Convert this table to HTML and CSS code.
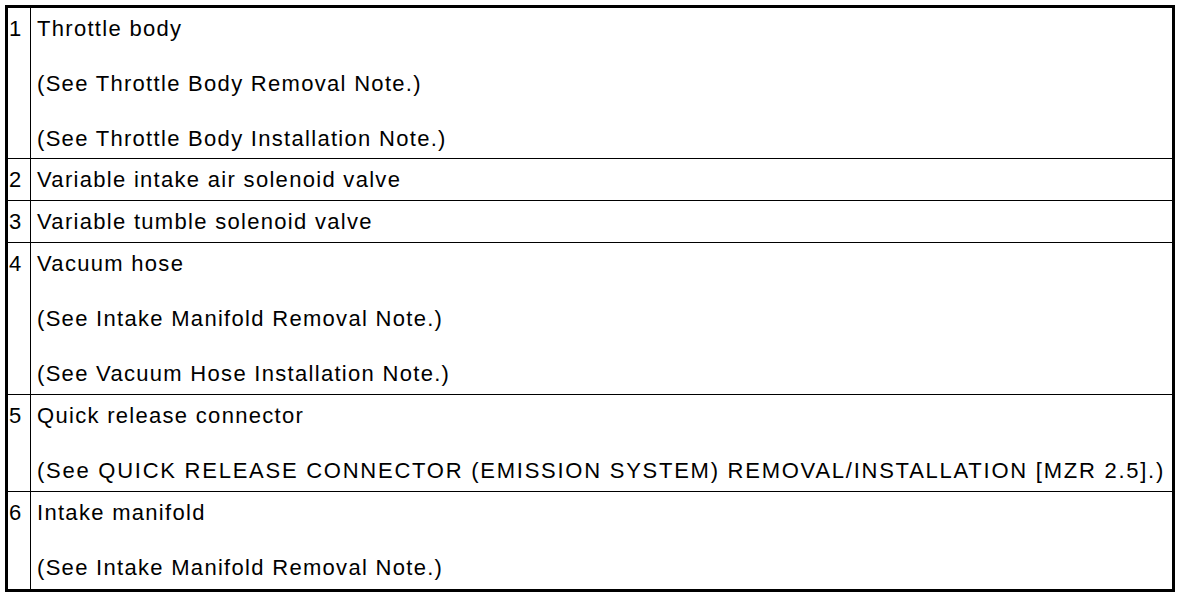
FILE: index.html
```html
<!DOCTYPE html>
<html>
<head>
<meta charset="utf-8">
<link rel="stylesheet" href="styles.css">
</head>
<body>
<div class="table">
  <div class="row">
    <div class="num">1</div>
    <div class="desc">
      <p>Throttle body</p>
      <p>(See Throttle Body Removal Note.)</p>
      <p>(See Throttle Body Installation Note.)</p>
    </div>
  </div>
  <div class="row">
    <div class="num">2</div>
    <div class="desc"><p>Variable intake air solenoid valve</p></div>
  </div>
  <div class="row">
    <div class="num">3</div>
    <div class="desc"><p>Variable tumble solenoid valve</p></div>
  </div>
  <div class="row">
    <div class="num">4</div>
    <div class="desc">
      <p>Vacuum hose</p>
      <p>(See Intake Manifold Removal Note.)</p>
      <p>(See Vacuum Hose Installation Note.)</p>
    </div>
  </div>
  <div class="row">
    <div class="num">5</div>
    <div class="desc">
      <p>Quick release connector</p>
      <p class="caps">(See QUICK RELEASE CONNECTOR (EMISSION SYSTEM) REMOVAL/INSTALLATION [MZR 2.5].)</p>
    </div>
  </div>
  <div class="row">
    <div class="num">6</div>
    <div class="desc">
      <p>Intake manifold</p>
      <p>(See Intake Manifold Removal Note.)</p>
    </div>
  </div>
</div>
</body>
</html>
```
FILE: styles.css
```css
html, body {
  margin: 0;
  padding: 0;
  background: #fff;
}
body {
  padding: 5px 0 0 5px;
  font-family: "Liberation Sans", Arial, sans-serif;
  font-size: 22px;
  color: #000;
}
.table {
  width: 1164px;
  border: 3px solid #000;
}
.row {
  display: flex;
  border-bottom: 1px solid #000;
}
.row:last-child {
  border-bottom: none;
}
.num {
  width: 21px;
  padding-left: 1px;
  border-right: 1px solid #000;
  padding-top: 9px;
  line-height: 23px;
  letter-spacing: 1px;
}
.desc {
  flex: 1;
  padding: 9px 0 9px 6px;
  display: flex;
  flex-direction: column;
  gap: 32px;
}
.row:first-child .desc {
  padding-bottom: 8px;
}
.row:last-child .desc {
  padding-bottom: 10px;
}
.desc p {
  margin: 0;
  line-height: 23px;
  letter-spacing: 1.3px;
  white-space: nowrap;
}
.desc p.caps {
  letter-spacing: 1.75px;
}
```
